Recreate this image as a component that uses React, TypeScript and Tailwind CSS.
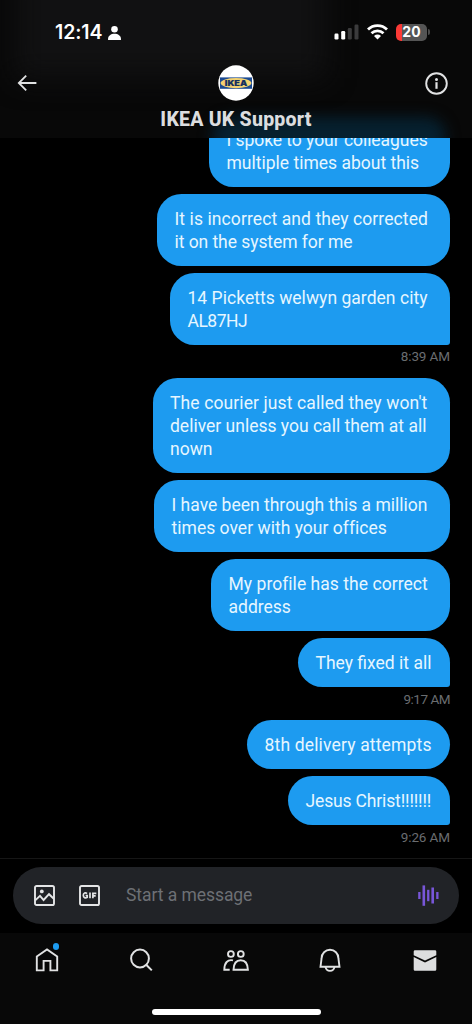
import React, { type ReactNode } from "react";

type Line = { text: string; tracking?: string };

function Bubble({ lines, width, tail = false }: { lines: Line[]; width: string; tail?: boolean }) {
  return (
    <div
      className={`${width} shrink-0 rounded-[24.5px] bg-[#1d9bf0] pb-[12.6px] pt-[13.8px] pl-[17.5px] ${tail ? "rounded-br-[3px]" : ""}`}
    >
      {lines.map((l) => (
        <p key={l.text} className={`whitespace-nowrap text-[17.5px] leading-[22.8px] text-[#e6f6ff] ${l.tracking ?? ""}`}>
          {l.text}
        </p>
      ))}
    </div>
  );
}

function Time({ children }: { children: ReactNode }) {
  return <p className="shrink-0 text-[13.5px] leading-[15px] tracking-[-0.1px] text-[#6a6d70]">{children}</p>;
}

function StatusBar() {
  return (
    <div className="flex h-[64px] items-center justify-between pl-[55px] pr-[42px]">
      <div className="flex items-center gap-[6px] text-white">
        <span className="font-['Inter'] text-[19.5px] font-semibold leading-6 tracking-[-0.1px]">12:14</span>
        <svg className="mt-px h-[14px] w-[13px]" viewBox="0 0 13 14" fill="currentColor">
          <circle cx="6.5" cy="3.3" r="3.3" />
          <path d="M0 13.4C0 9.6 3 7.8 6.5 7.8s6.5 1.8 6.5 5.6c0 .4-.2.6-.6.6H.6c-.4 0-.6-.2-.6-.6Z" />
        </svg>
      </div>
      <div className="flex items-center">
        <svg className="h-4 w-[25px]" viewBox="0 0 25 16">
          <rect x="0.5" y="9.5" width="4" height="6" rx="1.2" fill="#fff" />
          <rect x="7.2" y="7" width="4" height="8.5" rx="1.2" fill="#fff" />
          <rect x="13.8" y="4" width="4" height="11.5" rx="1.2" fill="#3b3b3c" />
          <rect x="20.5" y="0.5" width="4" height="15" rx="1.2" fill="#3b3b3c" />
        </svg>
        <svg className="ml-[8px] h-4 w-[21px]" viewBox="0 0 21 16" fill="none" stroke="#fff" strokeWidth="2.8">
          <path d="M1 5.6C6.2.4 14.8.4 20 5.6" />
          <path d="M4.5 9.2c3.4-3.2 8.6-3.2 12 0" />
          <path d="M7 11.9c2-1.8 5-1.8 7 0L10.5 15.6Z" fill="#fff" stroke="none" />
        </svg>
        <div className="ml-[8px] flex h-[17px] w-[31px] items-center justify-center overflow-hidden rounded-[5px] bg-[linear-gradient(90deg,#fb3a36_0_6px,#555_6px)] font-['Inter'] text-[14px] font-bold leading-none text-white">
          20
        </div>
        <span className="ml-px h-[6px] w-[2px] rounded-r bg-[#4a4a4a]" />
      </div>
    </div>
  );
}

function Logo() {
  return (
    <svg className="h-9 w-9" viewBox="0 0 36 36">
      <circle cx="18" cy="18" r="17.7" fill="#fff" />
      <rect x="2" y="12.4" width="32" height="11.4" fill="#1b4a92" />
      <ellipse cx="18" cy="18.1" rx="15.4" ry="5.1" fill="#f3d272" />
      <text x="18" y="20.9" textAnchor="middle" textLength="22.5" lengthAdjust="spacingAndGlyphs" fontSize="7.8" fontWeight="900" fill="#15305f" stroke="#15305f" strokeWidth="0.15" fontFamily="Inter, sans-serif">
        IKEA
      </text>
    </svg>
  );
}

function Header() {
  return (
    <header className="relative z-10 h-[138px] shrink-0 overflow-hidden bg-[#080808]">
      <div className="absolute -top-8 left-4 h-[110px] w-[310px] bg-[#111112] blur-[14px]" />
      <div className="absolute left-[212px] top-[117px] h-10 w-[234px] rounded-[20px] bg-[#06202f] blur-[7px]" />
      <div className="relative">
        <StatusBar />
        <div className="flex h-[38px] items-center justify-between pl-[17px] pr-6">
          <svg className="h-[18px] w-5" viewBox="0 0 20 18" fill="none" stroke="#e1e2e3" strokeWidth="1.8">
            <path d="M9.2 1.6 1.8 9l7.4 7.4M1.8 9h17.6" />
          </svg>
          <div className="ml-[10px]"><Logo /></div>
          <svg className="h-[23px] w-[23px]" viewBox="0 0 23 23" fill="none" stroke="#e1e2e3" strokeWidth="1.9">
            <circle cx="11.5" cy="11.5" r="10.3" />
            <path d="M11.5 10.2v6.6" strokeWidth="2.2" />
            <circle cx="11.5" cy="7.4" r="1.5" fill="#e1e2e3" stroke="none" />
          </svg>
        </div>
        <h1 className="mt-[4px] text-center text-[19.5px] font-extrabold leading-7 tracking-[0.23px] text-[#dcdddf]">IKEA UK Support</h1>
      </div>
    </header>
  );
}

function Composer() {
  return (
    <div className="flex h-[75px] shrink-0 border-t border-[#161616] px-[13px] pt-[8px]">
      <div className="flex h-[57px] flex-1 items-center rounded-full bg-[#212327] pl-[21px] pr-[20px]">
        <svg className="h-[21px] w-[21px]" viewBox="0 0 21 21" fill="none" stroke="#e4e5e6" strokeWidth="1.9">
          <rect x="1" y="1" width="19" height="19" rx="1.6" />
          <path d="m1.2 15.4 4.8-4.6 3.6 4.2 5.4-5.8 4.8 4.6" />
          <circle cx="7.8" cy="6.4" r="1.9" fill="#e4e5e6" stroke="none" />
        </svg>
        <svg className="ml-6 h-[21px] w-[21px]" viewBox="0 0 21 21" fill="none" stroke="#e4e5e6" strokeWidth="1.9">
          <rect x="1" y="1" width="19" height="19" rx="1.6" />
          <path d="M8 8.6C6.5 7.2 4.3 8 4.3 10.3c0 2.5 2.3 3.2 3.9 2v-1.8H6.6M11 7.5v5.8M13.9 13.3V8.3h3.4M13.9 10.9h2.8" strokeWidth="1.7" />
        </svg>
        <span className="ml-[26px] flex-1 text-[17.5px] tracking-[-0.06px] text-[#6d7075]">Start a message</span>
        <svg className="h-[21px] w-[21px]" viewBox="0 0 21 21" fill="#7856d8">
          <rect x="0.2" y="7" width="2.3" height="7" />
          <rect x="4.5" y="0.4" width="2.6" height="20.4" />
          <rect x="9.1" y="4.8" width="2.3" height="11.4" />
          <rect x="13.4" y="2.5" width="2.6" height="16" />
          <rect x="18.2" y="7" width="2.3" height="7" />
        </svg>
      </div>
    </div>
  );
}

function TabBar() {
  return (
    <nav className="flex h-[91px] shrink-0 flex-col items-center justify-between bg-[#080808] pb-[9px] pt-[12.5px]">
      <div className="grid w-full grid-cols-5 justify-items-center text-[#e1e2e3]">
        <div className="relative h-7 w-7">
          <svg className="h-7 w-7" viewBox="0 0 28 28" fill="none" stroke="currentColor" strokeWidth="1.9">
            <path d="M3.8 10.5 14 3.5l10.2 7v13.9h-6.8v-9.5h-6.8v9.5H3.8Z" />
          </svg>
          <span className="absolute -top-[2.5px] right-[2px] h-[6.5px] w-[6.5px] rounded-full bg-[#1d9bf0]" />
        </div>
        <svg className="h-7 w-7" viewBox="0 0 28 28" fill="none" stroke="currentColor" strokeWidth="2">
          <circle cx="12" cy="12.5" r="8.9" />
          <path d="m18.2 18.7 5.6 5.7" />
        </svg>
        <svg className="h-7 w-7" viewBox="0 0 28 28" fill="none" stroke="currentColor" strokeWidth="1.9">
          <circle cx="8.9" cy="8" r="2.9" />
          <circle cx="18.8" cy="8" r="2.9" />
          <path d="M11 14.4C5.6 13.2 2.4 16.8 2.3 23.7h5.4M11.5 23.7c.2-6.3 2.8-9.5 7.2-9.5s7 3.2 7.2 9.5Z" />
        </svg>
        <svg className="h-7 w-7" viewBox="0 0 28 28" fill="none" stroke="currentColor" strokeWidth="1.9">
          <path d="M5.6 12.2a8.4 8.4 0 0 1 16.8 0l1.1 8.5h-19Z" />
          <path d="M9.5 20.9c.5 2.6 2.2 4 4.5 4s4-1.4 4.5-4" />
        </svg>
        <svg className="h-7 w-7" viewBox="0 0 28 28" fill="#dddedf">
          <path d="M4 4.3h20a1.3 1.3 0 0 1 1.3 1.3v3.7L14 14.4 2.7 9.3V5.6A1.3 1.3 0 0 1 4 4.3Z" />
          <path d="M2.7 11.1 14 16.5l11.3-5.4v12.3a1.3 1.3 0 0 1-1.3 1.3H4a1.3 1.3 0 0 1-1.3-1.3Z" />
        </svg>
      </div>
      <div className="h-[6px] w-[169px] rounded-full bg-white" />
    </nav>
  );
}

export default function App() {
  return (
    <div className="flex h-[1024px] w-[472px] flex-col overflow-hidden bg-black font-['Roboto',sans-serif]">
      <Header />
      <main className="flex min-h-0 flex-1 flex-col items-end justify-end gap-[7px] overflow-hidden pb-[13.3px] pr-[22px]">
        <Bubble width="w-[241px]" lines={[{ text: "I spoke to your colleagues", tracking: "tracking-[-0.05px]" }, { text: "multiple times about this" }]} />
        <Bubble width="w-[293px]" lines={[{ text: "It is incorrect and they corrected", tracking: "tracking-[0.09px]" }, { text: "it on the system for me", tracking: "tracking-[-0.06px]" }]} />
        <div className="mb-[7px] flex shrink-0 flex-col items-end gap-[4.5px]">
          <Bubble tail width="w-[280px]" lines={[{ text: "14 Picketts welwyn garden city", tracking: "tracking-[0.03px]" }, { text: "AL87HJ", tracking: "tracking-[-0.5px]" }]} />
          <Time>8:39 AM</Time>
        </div>
        <Bubble width="w-[297.5px]" lines={[{ text: "The courier just called they won't", tracking: "tracking-[0.11px]" }, { text: "deliver unless you call them at all" }, { text: "nown" }]} />
        <Bubble width="w-[296px]" lines={[{ text: "I have been through this a million" }, { text: "times over with your offices", tracking: "tracking-[0.02px]" }]} />
        <Bubble width="w-[239px]" lines={[{ text: "My profile has the correct", tracking: "tracking-[0.04px]" }, { text: "address" }]} />
        <div className="mb-[6.2px] flex shrink-0 flex-col items-end gap-[4.3px]">
          <Bubble tail width="w-[152px]" lines={[{ text: "They fixed it all" }]} />
          <Time><span className="tracking-[-0.5px]">9:17 AM</span></Time>
        </div>
        <Bubble width="w-[203px]" lines={[{ text: "8th delivery attempts", tracking: "tracking-[0.16px]" }]} />
        <div className="flex shrink-0 flex-col items-end gap-[4.5px]">
          <Bubble tail width="w-[162px]" lines={[{ text: "Jesus Christ!!!!!!!", tracking: "tracking-[-0.15px]" }]} />
          <Time>9:26 AM</Time>
        </div>
      </main>
      <Composer />
      <TabBar />
    </div>
  );
}
